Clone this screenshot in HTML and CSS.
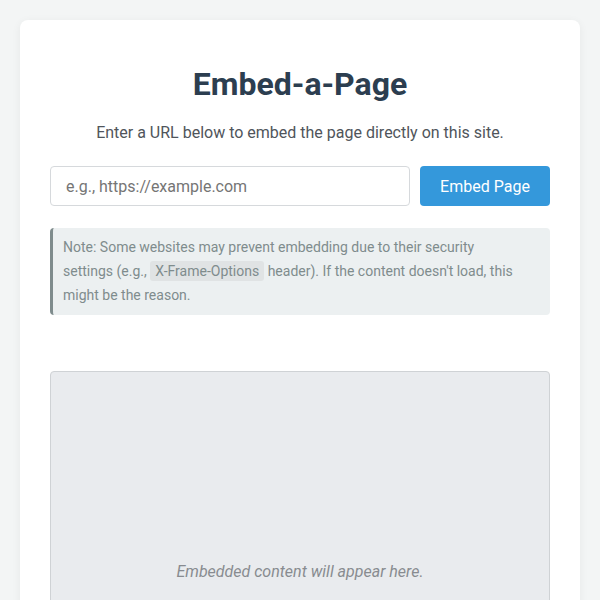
FILE: index.html
```html
<!DOCTYPE html>
<html lang="en">
<head>
<meta charset="utf-8">
<title>Embed-a-Page</title>
<link rel="stylesheet" href="styles.css">
</head>
<body>
<main class="card">
  <h1 class="title">Embed-a-Page</h1>
  <p class="subtitle">Enter a URL below to embed the page directly on this site.</p>
  <form class="url-row">
    <input class="url-input" type="text" placeholder="e.g., https://example.com">
    <button class="embed-btn" type="button">Embed Page</button>
  </form>
  <div class="note">Note: Some websites may prevent embedding due to their security settings (e.g., <code class="code">X-Frame-Options</code> header). If the content doesn't load, this might be the reason.</div>
  <div class="frame">
    <p class="frame-text">Embedded content will appear here.</p>
  </div>
</main>
</body>
</html>
```

FILE: styles.css
```css
html, body {
  margin: 0;
  padding: 0;
}
body {
  background: #f3f5f5;
  font-family: Roboto, "Noto Sans", sans-serif;
  padding: 20px;
}
.card {
  background: #ffffff;
  border-radius: 8px;
  box-shadow: 0 2px 10px rgba(0, 0, 0, 0.06);
  padding: 46px 30px 30px;
}
.title {
  margin: 0;
  text-align: center;
  font-size: 32px;
  font-weight: 700;
  line-height: 37px;
  color: #2c3e50;
}
.subtitle {
  margin: 20px 0 0;
  text-align: center;
  font-size: 16px;
  line-height: 20px;
  color: #50555b;
}
.url-row {
  display: flex;
  gap: 10px;
  margin: 23px 0 0;
}
.url-input {
  flex: 1;
  height: 40px;
  box-sizing: border-box;
  border: 1px solid #d6d9dc;
  border-radius: 4px;
  padding: 0 15px;
  font-family: Roboto, sans-serif;
  font-size: 16px;
  color: #333;
}
.url-input::placeholder {
  color: #757575;
}
.embed-btn {
  width: 130px;
  height: 40px;
  border: none;
  border-radius: 4px;
  background: #3498db;
  color: #ffffff;
  font-family: Roboto, sans-serif;
  font-size: 16px;
}
.note {
  margin-top: 22px;
  background: #ecf0f1;
  border-left: 3px solid #7f8c8d;
  border-radius: 4px;
  padding: 8px 30px 8px 10px;
  font-size: 14px;
  line-height: 23.8px;
  color: #7f8c8d;
}
.code {
  font-family: Roboto, sans-serif;
  background: #e0e3e4;
  border-radius: 3px;
  padding: 2px 5px;
  color: #7f8c8d;
}
.frame {
  margin-top: 56px;
  height: 400px;
  box-sizing: border-box;
  background: #e9ebee;
  border: 1px solid #cfd2d5;
  border-radius: 4px;
  display: flex;
  align-items: center;
  justify-content: center;
}
.frame-text {
  margin: 0;
  font-style: italic;
  font-size: 16px;
  color: #888b90;
}
```
